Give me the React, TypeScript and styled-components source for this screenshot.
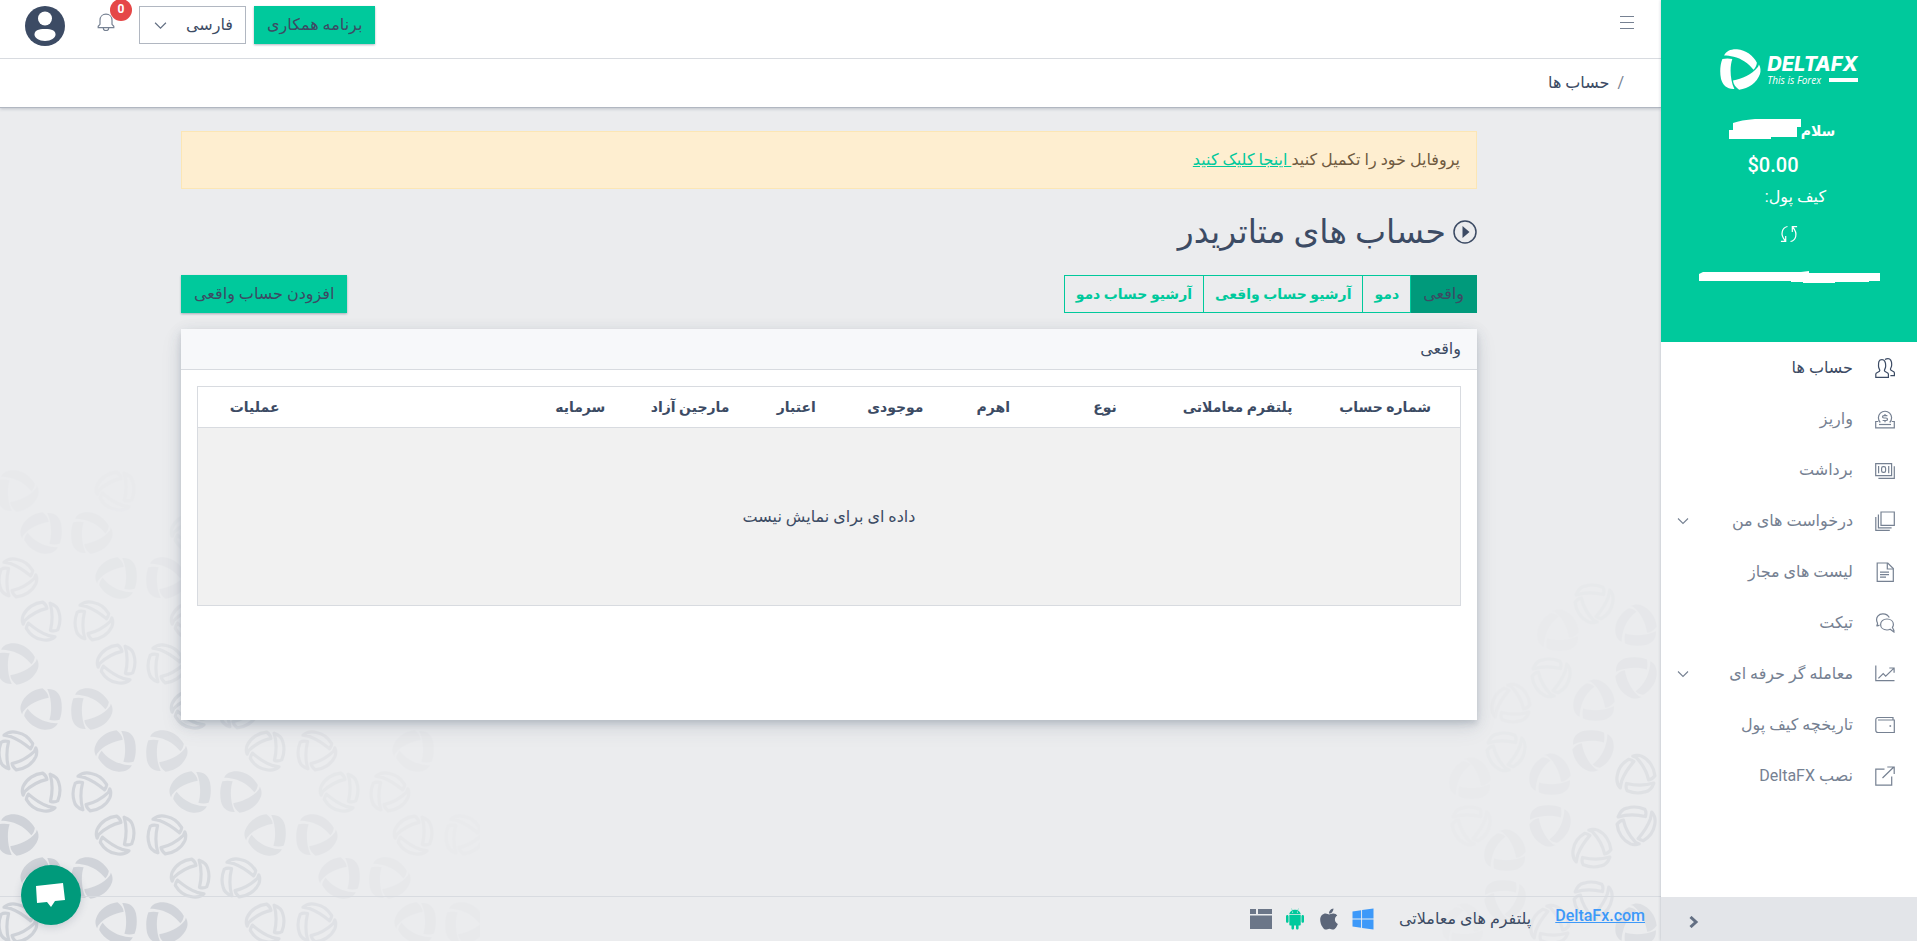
import React from 'react';
import styled, { createGlobalStyle } from 'styled-components';
import { FaWindows, FaApple } from 'react-icons/fa';
import { AiFillAndroid } from 'react-icons/ai';

const GlobalStyle = createGlobalStyle`
  *, *::before, *::after { box-sizing: border-box; }
  body {
    margin: 0;
    background: #ebecee;
    color: #3c4b64;
    font-family: Roboto, "DejaVu Sans", sans-serif;
    font-size: 16px;
    line-height: 24px;
  }
  button, select { font: inherit; }
`;

const Shell = styled.div`
  display: flex;
  min-height: 100vh;
`;

/* ---------- sidebar ---------- */

const Sidebar = styled.aside`
  display: flex;
  flex-direction: column;
  flex: 0 0 256px;
  background: #fff;
  box-shadow: 0 0 3px rgba(60, 75, 100, 0.3);
  z-index: 1;
`;

const Brand = styled.div`
  display: flex;
  flex-direction: column;
  align-items: center;
  height: 342px;
  padding-top: 49px;
  background: #00c99c;
  color: #fff;
`;

const LogoLink = styled.a`
  display: flex;
  direction: ltr;
  gap: 6px;
  color: #fff;
  text-decoration: none;
`;

const Wordmark = styled.span`
  display: flex;
  flex-direction: column;
  padding-top: 3px;
`;

const BrandName = styled.span`
  font-family: Inter, sans-serif;
  font-style: italic;
  font-size: 20px;
  font-weight: 800;
  line-height: 24px;
`;

const Tagline = styled.span`
  display: flex;
  align-items: center;
  justify-content: space-between;
  font-family: "Open Sans", sans-serif;
  font-style: italic;
  font-size: 10px;
  line-height: 8px;

  &::after {
    content: "";
    width: 29px;
    height: 4px;
    background: #fff;
  }
`;

const Greeting = styled.div`
  display: flex;
  align-items: center;
  height: 24px;
  margin: 29px 14px 0 0;
  font-size: 14px;
  font-weight: 700;
`;

const Balance = styled.div`
  direction: ltr;
  margin: 8px 32px 0 0;
  font-size: 20px;
  font-weight: 500;
  line-height: 28px;
`;

const WalletLabel = styled.div`
  margin: 6px 10px 0 0;
  width: 84px;
`;

const RefreshButton = styled.button`
  display: flex;
  margin-top: 16px;
  padding: 0;
  border: 0;
  background: none;
  color: #fff;
`;

const Account = styled.div`
  margin-top: 28px;
  line-height: 0;
`;

const Nav = styled.nav`
  flex: 1;
`;

const NavLink = styled.a<{ $active?: boolean }>`
  display: flex;
  align-items: center;
  gap: 22px;
  height: 51px;
  padding: 0 22px 0 16px;
  color: ${(p) => (p.$active ? '#3c4b64' : '#768192')};
  text-decoration: none;
`;

const NavText = styled.span`
  flex: 1;
`;

const SidebarFoot = styled.button`
  display: flex;
  align-items: center;
  justify-content: flex-end;
  height: 44px;
  padding: 6px 27px 0;
  border: 0;
  background: #e3e5e9;
  color: #636f83;
`;

/* ---------- main column ---------- */

const Main = styled.div`
  position: relative;
  display: flex;
  flex-direction: column;
  flex: 1;
  min-width: 0;
`;

const Pattern = styled.svg<{ $side: 'left' | 'right' }>`
  position: absolute;
  bottom: 0;
  ${(p) => p.$side}: 0;
  color: #a2a9b5;
`;

const Masthead = styled.header`
  position: relative;
  background: #fff;
  box-shadow: 0 1px 3px rgba(60, 75, 100, 0.25);
`;

const TopBar = styled.div`
  display: flex;
  align-items: flex-start;
  justify-content: space-between;
  height: 59px;
  padding: 6px 25px 0;
  border-bottom: 1px solid #d8dbe0;
`;

const Tools = styled.div`
  display: flex;
  align-items: flex-start;
  gap: 8px;
`;

const IconButton = styled.button`
  position: relative;
  display: flex;
  margin: 0;
  padding: 7px 0;
  border: 0;
  background: none;
  color: #768192;
`;

const BellButton = styled(IconButton)`
  margin: 0 16px 0 24px;
`;

const Avatar = styled(IconButton)`
  padding: 0;
  color: #3c4b64;
`;

const Badge = styled.span`
  position: absolute;
  top: -7px;
  left: 13px;
  width: 22px;
  height: 22px;
  border-radius: 11px;
  background: #e54747;
  color: #fff;
  font-size: 12px;
  font-weight: 700;
  line-height: 20px;
`;

const Button = styled.button`
  height: 38px;
  padding: 0 13px;
  border: 0;
  background: #00c99c;
  box-shadow: 0 1px 2px rgba(60, 75, 100, 0.4);
  color: #3c4b64;
  white-space: nowrap;
`;

const SelectBox = styled.label`
  display: flex;
  align-items: center;
  position: relative;
  color: #636f83;
  svg { position: absolute; left: 15px; pointer-events: none; }
`;

const Select = styled.select`
  appearance: none;
  width: 107px;
  height: 38px;
  padding: 0 12px;
  border: 1px solid #b1b7c1;
  border-radius: 0;
  background: #fff;
  color: #3c4b64;
`;

const Breadcrumb = styled.nav`
  display: flex;
  align-items: center;
  gap: 8px;
  height: 49px;
  padding: 0 37px;
  border-bottom: 1px solid #b1b7c1;
  span { color: #768192; }
  a { color: #3c4b64; text-decoration: none; }
`;

const Content = styled.main`
  position: relative;
  flex: 1;
  padding: 23px 24px 24px 21px;
`;

const Container = styled.div`
  max-width: 1296px;
  margin: 0 auto;
`;

const Alert = styled.div`
  padding: 16px;
  border: 1px solid #fce6b5;
  background: #feeed0;
  color: #6f5a40;
  a { color: #00c99c; }
`;

const Title = styled.h1`
  display: flex;
  align-items: center;
  gap: 7px;
  margin: 22px 0;
  font-size: 33px;
  font-weight: 500;
  line-height: 42px;
`;

const Controls = styled.div`
  display: flex;
  justify-content: space-between;
  margin-bottom: 16px;
`;

const Tabs = styled.div`
  display: flex;
`;

const Tab = styled.button<{ $active?: boolean }>`
  height: 38px;
  margin-left: -1px;
  padding: 0 ${(p) => (p.$active ? '12px' : '11px')};
  border: 1px solid ${(p) => (p.$active ? '#009a7b' : '#00c99c')};
  background: ${(p) => (p.$active ? '#009a7b' : 'transparent')};
  color: ${(p) => (p.$active ? '#3c4b64' : '#00c99c')};
  font-size: ${(p) => (p.$active ? '16px' : '14px')};
  font-weight: ${(p) => (p.$active ? 400 : 700)};
  &:last-child { margin-left: 0; }
`;

const Card = styled.section`
  min-height: 391px;
  background: #fff;
  box-shadow: 0 4px 5px rgba(60, 75, 100, 0.14), 0 3px 14px rgba(60, 75, 100, 0.12), 0 8px 20px rgba(60, 75, 100, 0.1);
`;

const CardHeader = styled.h2`
  margin: 0;
  padding: 8px 16px;
  border-bottom: 1px solid #d8dbe0;
  background: #f7f8fa;
  font-size: 16px;
  font-weight: 400;
`;

const CardBody = styled.div`
  padding: 16px;
`;

const Table = styled.table`
  width: 100%;
  table-layout: fixed;
  border-collapse: collapse;
  border: 1px solid #d8dbe0;
  th { height: 41px; padding: 0; border-bottom: 1px solid #d8dbe0; font-size: 14px; font-weight: 700; white-space: nowrap; }
  td { height: 178px; background: #f1f1f1; text-align: center; }
`;

const Footer = styled.footer`
  position: relative;
  display: flex;
  align-items: center;
  gap: 24px;
  height: 45px;
  padding: 0 16px;
  border-top: 1px solid #d8dbe0;
`;

const SiteLink = styled.a`
  margin-bottom: 6px;
  color: #3d99f9;
  font-weight: 500;
`;

const Platforms = styled.div`
  display: flex;
  gap: 10px;
`;

const Platform = styled.a<{ $color: string }>`
  display: flex;
  color: ${(p) => p.$color};
`;

const Chat = styled.button`
  position: fixed;
  left: 21px;
  bottom: 16px;
  z-index: 2;
  display: flex;
  align-items: center;
  justify-content: center;
  width: 60px;
  height: 60px;
  border: 0;
  border-radius: 50%;
  background: #009a7b;
  box-shadow: 0 2px 8px rgba(60, 75, 100, 0.2);
`;

/* ---------- drawings ---------- */

const blades = [
  'M12 19 C18 6 32 0 50 1 C76 3 97 20 108 40 C107 48 104 55 98 61 C84 42 62 28 40 23 C30 20 20 19 12 19Z',
  'M7 29 C16 27 27 27 36 29 C29 48 28 88 42 117 C20 118 8 106 3 88 C-1 68 0 46 7 29Z',
  'M114 45 C119 54 120 64 117 73 C108 98 84 116 56 119 C46 112 39 103 38 92 C64 88 94 74 109 55 C112 52 113 48 114 45Z',
];

const hollowBlades = [
  'M20 15 C30 6 46 4 58 7 C76 10 92 22 102 39 C101 45 99 50 96 54 C80 40 62 27 40 19 C32 17 26 16 20 15Z',
  'M12 35 C18 31 26 31 33 33 C27 58 26 84 34 111 C20 106 11 97 9 86 C4 70 6 50 12 35Z',
  'M111 51 C115 60 114 68 111 76 C101 98 78 112 55 114 C48 109 44 102 43 96 C66 91 90 77 107 61Z',
];

const Blades = ({ outlined = false }: { outlined?: boolean }) =>
  outlined ? (
    <g fill="none" stroke="currentColor" strokeWidth="9" strokeLinejoin="round">
      {hollowBlades.map((d) => <path key={d} d={d} />)}
    </g>
  ) : (
    <g fill="currentColor">
      {blades.map((d) => <path key={d} d={d} />)}
    </g>
  );

type Mark = [x: number, y: number, turn: number, outlined: 0 | 1, opacity: number];

const leftMarks: Mark[] = [
  [18, 31, 0, 0, 0.03], [115, 31, 180, 1, 0.02],
  [41, 73, 180, 0, 0.06], [92, 73, 0, 0, 0.05], [190, 73, 180, 1, 0.04],
  [18, 118, 0, 1, 0.1], [116, 118, 180, 0, 0.07], [167, 118, 0, 0, 0.06],
  [41, 161, 180, 1, 0.15], [94, 161, 0, 1, 0.12], [190, 161, 180, 1, 0.1],
  [18, 204, 0, 0, 0.18], [116, 204, 180, 1, 0.15], [167, 204, 0, 1, 0.13],
  [41, 249, 180, 0, 0.24], [92, 249, 0, 0, 0.2], [190, 249, 180, 1, 0.22], [239, 249, 0, 1, 0.15],
  [18, 291, 0, 1, 0.36], [115, 291, 180, 0, 0.24], [167, 291, 0, 0, 0.2], [265, 291, 180, 1, 0.14], [317, 291, 0, 1, 0.1], [413, 291, 180, 0, 0.03],
  [41, 332, 180, 1, 0.38], [92, 332, 0, 1, 0.34], [190, 332, 180, 0, 0.22], [241, 332, 0, 0, 0.18], [339, 332, 180, 1, 0.07], [390, 332, 0, 1, 0.05],
  [18, 375, 0, 0, 0.38], [115, 375, 180, 1, 0.35], [167, 375, 0, 1, 0.32], [265, 375, 180, 0, 0.16], [317, 375, 0, 0, 0.1], [413, 375, 180, 1, 0.05], [465, 375, 0, 1, 0.02],
  [41, 418, 180, 0, 0.4], [92, 418, 0, 0, 0.36], [190, 418, 180, 1, 0.28], [241, 418, 0, 1, 0.22], [339, 418, 180, 0, 0.09], [390, 418, 0, 0, 0.05],
  [18, 463, 0, 1, 0.4], [116, 463, 180, 0, 0.36], [167, 463, 0, 0, 0.34], [265, 463, 180, 1, 0.2], [317, 463, 0, 1, 0.15], [415, 463, 180, 0, 0.05], [466, 463, 0, 0, 0.03],
];

const rightMarks: Mark[] = [
  [154, 24, 90, 1, 0.04], [196, 45, 270, 0, 0.06], [118, 50, 270, 0, 0.02],
  [111, 98, 90, 1, 0.04], [196, 98, 90, 0, 0.08], [154, 120, 270, 0, 0.06], [71, 123, 270, 1, 0.03],
  [66, 172, 90, 1, 0.04], [153, 171, 90, 0, 0.09], [110, 194, 270, 0, 0.06], [196, 194, 270, 1, 0.16], [30, 198, 270, 0, 0.02],
  [110, 246, 90, 0, 0.08], [196, 246, 90, 1, 0.2], [31, 246, 90, 1, 0.02], [65, 270, 270, 0, 0.05], [152, 268, 270, 1, 0.14],
  [65, 321, 90, 0, 0.05], [153, 321, 90, 1, 0.15], [110, 344, 270, 1, 0.09], [196, 344, 270, 0, 0.18], [23, 344, 270, 0, 0.02],
];

const Marks = ({ marks }: { marks: Mark[] }) => (
  <>
    {marks.map(([x, y, turn, outlined, opacity]) => (
      <g key={`${x}-${y}`} opacity={opacity} transform={`translate(${x} ${y}) rotate(${turn}) scale(.35) translate(-60 -60)`}>
        <Blades outlined={outlined === 1} />
      </g>
    ))}
  </>
);

const Line = ({ size = 20, box = 20, width = 1.2, children }: { size?: number; box?: number; width?: number; children: React.ReactNode }) => (
  <svg width={size} height={size} viewBox={`0 0 ${box} ${box}`} fill="none" stroke="currentColor" strokeWidth={width} aria-hidden="true">
    {children}
  </svg>
);

const ChevronDown = ({ size = 12 }: { size?: number }) => (
  <Line size={size} box={12} width={1.1}><path d="M1 3.5 6 8.5 11 3.5" /></Line>
);

const navIcons = {
  people: (
    <>
      <path d="M.8 19.3V16c0-1.8 4-1.8 4-3.6 0-1-1.3-2-1.3-4.400C3.500 4.500 3.500 1.700 7 1.700s3.700 2.800 3.700 6.300c0 2.400-1.300 3.400-1.300 4.400 0 1.800 4 1.800 4 3.600v3.300Z" />
      <path d="M10 1.600C11 .9 12 .7 13 .7c3.500 0 3.700 2.800 3.700 6.100 0 2.400-1.300 3.400-1.300 4.400 0 1.800 4 1.800 4 3.600v2.900h-4" />
    </>
  ),
  deposit: (
    <>
      <path d="M3.200 12.500H.7v6.300h18.600v-6.300h-2.500" />
      <path d="M4 15.500h12" />
      <path d="M5.300 13.500a6.600 6.600 0 1 1 9.400 0" />
      <path d="M12.400 6.600H9c-2 0-2 2.400 0 2.400h2c2 0 2 2.500 0 2.500H7.600M10 5v1.600m0 4.900v1.700" />
    </>
  ),
  withdraw: (
    <>
      <path d="M.7 3.700h15.900v12H.7Z" />
      <path d="M19.300 6.200v12.100H3.400M3.600 6v7.300M13.700 6v7.300" />
      <rect x="6.600" y="6.700" width="4" height="5.600" rx="1.600" />
    </>
  ),
  requests: (
    <>
      <path d="M6 1h13.300v13.300H6Z" />
      <path d="M3.400 3.600v13.200h13.200M.8 6v13.300h14" />
    </>
  ),
  document: (
    <>
      <path d="M2.200 1h10.600l5.500 5.600v12.700H2.200Z" />
      <path d="M12.300 1v6h6M5 10.200h9M5 12.700h9M5 15.200h6" />
    </>
  ),
  chat: (
    <>
      <path d="M1.500 12.800c1.500-1.300 1.300-1.900.8-3.200C-.1 4 4.200.7 8 .8c3.200.1 5.200 1.400 6.300 3.800M1.500 12.800c1 .1 2.200-.2 3-.8" />
      <path d="M12 6c-3.900 0-6.400 2.400-6.400 5.500s2.600 5.500 6.400 5.500c1.300 0 2.300-.2 3.200-.7l3.700 2.700v-1.500l-1.500-3.100c.7-.9 1-1.800 1-2.900C18.400 8.400 15.900 6 12 6Z" />
    </>
  ),
  chart: (
    <>
      <path d="M.8 1.500v15.200h18.700" />
      <path d="m3.400 14.400 4.800-4.900 2.500 2.600 8.300-8M14.300 4h4.800v4.800" />
    </>
  ),
  wallet: (
    <>
      <path d="M18 5V2.500H3A2.200 2.200 0 0 0 .8 4.700v10.600c0 1.200 1 2.200 2.200 2.200h16.300V5H3" />
      <path d="M14.500 11h1.600" strokeWidth="1.600" />
    </>
  ),
  external: (
    <>
      <path d="M9.500 3.200H.8v15.900h15.900v-8.600" />
      <path d="M7.500 12 18.800 1M12.300 1h6.900v6.900" />
    </>
  ),
};

const navItems: { label: string; icon: keyof typeof navIcons; active?: boolean; group?: boolean }[] = [
  { label: 'حساب ها', icon: 'people', active: true },
  { label: 'واریز', icon: 'deposit' },
  { label: 'برداشت', icon: 'withdraw' },
  { label: 'درخواست های من', icon: 'requests', group: true },
  { label: 'لیست های مجاز', icon: 'document' },
  { label: 'تیکت', icon: 'chat' },
  { label: 'معامله گر حرفه ای', icon: 'chart', group: true },
  { label: 'تاریخچه کیف پول', icon: 'wallet' },
  { label: 'نصب DeltaFX', icon: 'external' },
];

const columns: { label: string; width: string }[] = [
  { label: 'شماره حساب', width: '11.9%' },
  { label: 'پلتفرم معاملاتی', width: '11.5%' },
  { label: 'نوع', width: '9.5%' },
  { label: 'اهرم', width: '8.2%' },
  { label: 'موجودی', width: '7.3%' },
  { label: 'اعتبار', width: '8.4%' },
  { label: 'مارجین آزاد', width: '8.4%' },
  { label: 'سرمایه', width: '9%' },
  { label: '', width: '16.8%' },
  { label: 'عملیات', width: '9%' },
];

const tabs = ['واقعی', 'دمو', 'آرشیو حساب واقعی', 'آرشیو حساب دمو'];

export default function App() {
  return (
    <Shell dir="rtl" lang="fa">
      <GlobalStyle />
      <Sidebar>
        <Brand>
          <LogoLink href="#">
            <svg width="41" height="41" viewBox="0 0 120 120" aria-hidden="true"><Blades /></svg>
            <Wordmark>
              <BrandName>DELTAFX</BrandName>
              <Tagline>This is Forex</Tagline>
            </Wordmark>
          </LogoLink>
          <Greeting>
            سلام
            <svg width="72" height="24" viewBox="0 0 72 24" fill="#fff" aria-hidden="true">
              <path d="M0 11h4V4q8-3 22-4h46v8h-4v10H42v2H0Z" />
            </svg>
          </Greeting>
          <Balance>$0.00</Balance>
          <WalletLabel>کیف پول:</WalletLabel>
          <RefreshButton aria-label="به‌روزرسانی">
            <Line size={18} box={18}>
              <path d="M7.500 1.500C2.500 2.500-.5 9 5 15.500M5.700 11v5.300H.9M10.500 16.500c5-1 8-7.500 2.500-14M12.300 7V1.700h4.800" />
            </Line>
          </RefreshButton>
          <Account>
            <svg width="182" height="14" viewBox="0 0 182 14" fill="#fff" aria-hidden="true">
              <path d="M1 10V3L5 1H103L111 0V2H182V10H171V11H137V12H105V11H93V10Z" />
            </svg>
          </Account>
        </Brand>
        <Nav>
          {navItems.map((item) => (
            <NavLink key={item.label} href="#" $active={item.active}>
              <Line>{navIcons[item.icon]}</Line>
              <NavText>{item.label}</NavText>
              {item.group && <ChevronDown />}
            </NavLink>
          ))}
        </Nav>
        <SidebarFoot aria-label="جمع کردن منو">
          <Line size={12} box={12} width={3}><path d="M2.500 1 8 6 2.500 11" /></Line>
        </SidebarFoot>
      </Sidebar>

      <Main>
        <Pattern $side="left" width="480" height="481" viewBox="0 0 480 481" aria-hidden="true">
          <Marks marks={leftMarks} />
        </Pattern>
        <Pattern $side="right" width="221" height="361" viewBox="0 0 221 361" aria-hidden="true">
          <Marks marks={rightMarks} />
        </Pattern>

        <Masthead>
          <TopBar>
            <IconButton aria-label="منو">
              <Line size={18} box={18}><path d="M2 3.500h14M2 9.500h14M2 15.500h14" /></Line>
            </IconButton>
            <Tools>
              <Button>برنامه همکاری</Button>
              <SelectBox>
                <Select aria-label="زبان" defaultValue="fa">
                  <option value="fa">فارسی</option>
                </Select>
                <ChevronDown size={13} />
              </SelectBox>
              <BellButton aria-label="اعلان‌ها">
                <Line size={18} box={18}>
                  <path d="M1.200 14.600v-1.300l1.800-2V7.200C3 3.500 5.600 1.200 9 1.200s6 2.300 6 6v4.100l1.800 2v1.300ZM6.200 14.800a2.800 2.800 0 0 0 5.600 0" />
                </Line>
                <Badge>0</Badge>
              </BellButton>
              <Avatar aria-label="حساب کاربری">
                <svg width="40" height="40" viewBox="0 0 40 40" aria-hidden="true">
                  <circle cx="20" cy="20" r="20" fill="currentColor" />
                  <circle cx="20" cy="12.500" r="7" fill="#fff" />
                  <path d="M9.500 28.500c0-4 3.500-5.500 10.500-5.500s10.500 1.500 10.500 5.500c0 3.500-4.500 6.500-10.500 6.500S9.500 32 9.500 28.500Z" fill="#fff" />
                </svg>
              </Avatar>
            </Tools>
          </TopBar>
          <Breadcrumb>
            <span>/</span>
            <a href="#">حساب ها</a>
          </Breadcrumb>
        </Masthead>

        <Content>
          <Container>
            <Alert role="alert">
              پروفایل خود را تکمیل کنید<a href="#"> اینجا کلیک کنید</a>
            </Alert>
            <Title>
              <svg width="24" height="24" viewBox="0 0 24 24" aria-hidden="true">
                <circle cx="12" cy="12" r="11" fill="none" stroke="currentColor" strokeWidth="1.500" />
                <path d="M9.500 6v12l7-6Z" fill="currentColor" />
              </svg>
              حساب های متاتریدر
            </Title>
            <Controls>
              <Tabs role="tablist">
                {tabs.map((tab, i) => (
                  <Tab key={tab} role="tab" aria-selected={i === 0} $active={i === 0}>{tab}</Tab>
                ))}
              </Tabs>
              <Button>افزودن حساب واقعی</Button>
            </Controls>
            <Card>
              <CardHeader>واقعی</CardHeader>
              <CardBody>
                <Table>
                  <colgroup>
                    {columns.map((c, i) => <col key={i} width={c.width} />)}
                  </colgroup>
                  <thead>
                    <tr>{columns.map((c, i) => <th key={i} scope="col">{c.label}</th>)}</tr>
                  </thead>
                  <tbody>
                    <tr><td colSpan={columns.length}>داده ای برای نمایش نیست</td></tr>
                  </tbody>
                </Table>
              </CardBody>
            </Card>
          </Container>
        </Content>

        <Footer>
          <SiteLink href="#">DeltaFx.com</SiteLink>
          <span>پلتفرم های معاملاتی</span>
          <Platforms>
            <Platform href="#" $color="#3d99f9" aria-label="Windows"><FaWindows size={24} /></Platform>
            <Platform href="#" $color="#5c6679" aria-label="Apple"><FaApple size={24} /></Platform>
            <Platform href="#" $color="#00c99c" aria-label="Android"><AiFillAndroid size={24} /></Platform>
            <Platform href="#" $color="#6b7688" aria-label="Web">
              <svg width="24" height="24" viewBox="0 0 24 24" fill="currentColor" aria-hidden="true">
                <path d="M1 2h6v5H1ZM9 2h14v5H9ZM1 8.500h22V22H1Z" />
              </svg>
            </Platform>
          </Platforms>
        </Footer>
      </Main>

      <Chat aria-label="گفتگو">
        <svg width="32" height="28" viewBox="0 0 32 28" fill="#fff" aria-hidden="true">
          <path d="m1 5 27-3 2 17-10 1-4 6-4-5-10 1Z" />
        </svg>
      </Chat>
    </Shell>
  );
}
